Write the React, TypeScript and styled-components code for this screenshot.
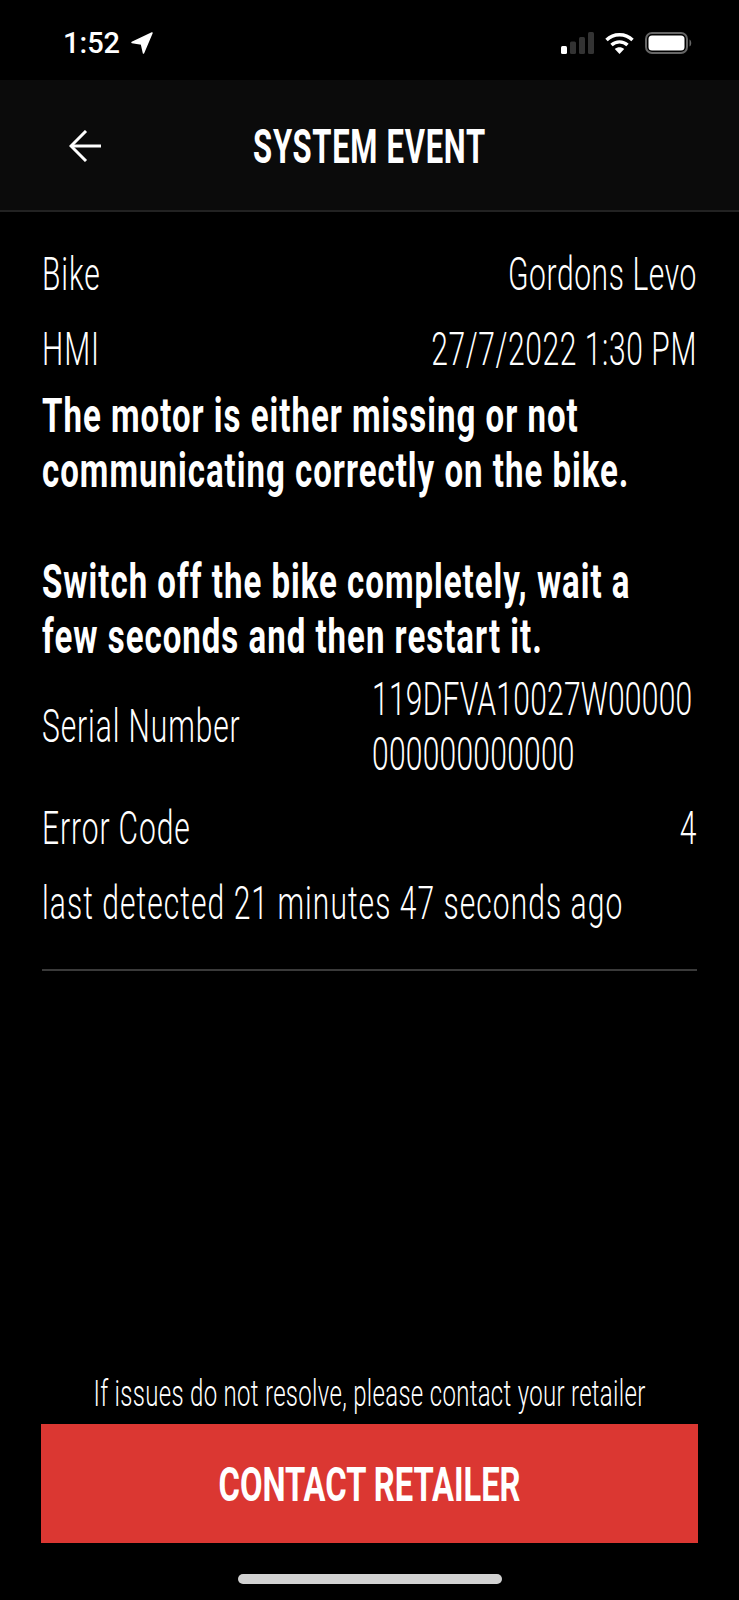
import React from 'react';
import styled, { createGlobalStyle } from 'styled-components';

const FONT = 'Roboto, "Liberation Sans", sans-serif';

const GlobalStyle = createGlobalStyle`
  html, body {
    margin: 0;
    padding: 0;
    background: #000;
  }
  * { box-sizing: border-box; }
`;

const Screen = styled.div`
  width: 739px;
  height: 1600px;
  background: #000;
  color: #fff;
  font-family: ${FONT};
  display: flex;
  flex-direction: column;
  overflow: hidden;
`;

// the original face is a condensed DIN, so a normal face is drawn taller
const Tall = styled.span<{ $scale?: number }>`
  display: inline-block;
  white-space: nowrap;
  transform: scaleY(${props => props.$scale ?? 1.55});
`;

const StatusBar = styled.div`
  height: 80px;
  flex: none;
  padding: 32px 47px 0 63px;
  display: flex;
  justify-content: space-between;
  align-items: flex-start;
`;

const StatusGroup = styled.div`
  display: flex;
  align-items: center;
  gap: 11px;
  height: 22px;
`;

const Clock = styled.span`
  font-size: 29px;
  font-weight: 500;
  line-height: 22px;
`;

const NavBar = styled.div`
  height: 132px;
  flex: none;
  background: #0b0b0b;
  border-bottom: 2px solid #222;
  display: flex;
  align-items: center;
  justify-content: center;
  position: relative;
`;

const BackButton = styled.button`
  position: absolute;
  left: 69px;
  top: 50px;
  padding: 0;
  border: 0;
  background: none;
  display: flex;
  color: #fff;
`;

const NavTitle = styled.h1`
  margin: 3px 0 0;
  font-size: 31px;
  font-weight: 700;
  line-height: 40px;
  letter-spacing: 0.7px;
`;

const Content = styled.div`
  padding: 24px 42px 0;
  display: flex;
  flex-direction: column;
`;

const Row = styled.div`
  display: flex;
  justify-content: space-between;
  align-items: center;
  min-height: 75px;
  font-size: 30px;
  font-weight: 300;
  letter-spacing: 0.9px;
`;

const SerialRow = styled(Row)`
  min-height: 124px;
  margin-bottom: 2px;
`;

const RowValue = styled(Tall)`
  letter-spacing: 0.6px;
`;

const DetectedLabel = styled(Tall)`
  letter-spacing: 1.05px;
`;

const SerialValue = styled.div`
  width: 325px;
  display: flex;
  flex-direction: column;
  letter-spacing: 0.25px;
`;

const SerialLine = styled.div`
  height: 55px;
  line-height: 55px;
`;

const Message = styled.div`
  margin-top: 2px;
  font-size: 33px;
  font-weight: 700;
  letter-spacing: 1px;
`;

const MessageLine = styled.div`
  height: 55.2px;
  line-height: 55.2px;
`;

const Divider = styled.hr`
  margin: 29px 0 0;
  border: 0;
  height: 2px;
  background: #3a3a3a;
`;

const Footer = styled.div`
  margin-top: auto;
  padding: 0 41px;
  display: flex;
  flex-direction: column;
  align-items: center;
`;

const Hint = styled.div`
  font-size: 24px;
  font-weight: 300;
  line-height: 54px;
  height: 57px;
  letter-spacing: 0.3px;
`;

const ContactButton = styled.button`
  width: 100%;
  height: 119px;
  padding: 3px 0 0;
  border: 0;
  background: #db3732;
  color: #fff;
  font-family: ${FONT};
  font-size: 32.7px;
  font-weight: 700;
`;

const HomeZone = styled.div`
  height: 57px;
  flex: none;
  display: flex;
  justify-content: center;
  padding-top: 31px;
`;

const HomeBar = styled.div`
  width: 264px;
  height: 10px;
  border-radius: 5px;
  background: #d2d2d2;
`;

const LocationIcon = () => (
  <svg width="22" height="22" viewBox="0 0 22 22" fill="#fff">
    <path d="M21 1 L1 10.5 L10.5 12 L12.5 21 Z" stroke="#fff" strokeWidth="1.5" strokeLinejoin="round" />
  </svg>
);

const SignalIcon = () => (
  <svg width="33" height="22" viewBox="0 0 33 22">
    <rect x="0" y="14" width="6" height="8" rx="1.5" fill="#fff" />
    <rect x="9" y="9.5" width="6" height="12.5" rx="1.5" fill="#333" />
    <rect x="18" y="5" width="6" height="17" rx="1.5" fill="#333" />
    <rect x="27" y="0" width="6" height="22" rx="1.5" fill="#333" />
  </svg>
);

const WifiIcon = () => (
  <svg width="29" height="22" viewBox="0 0 29 22" fill="none" stroke="#fff" strokeWidth="3.4">
    <path d="M1.5 8 C8.5 1 20.5 1 27.5 8" />
    <path d="M6.5 13 C11 8.8 18 8.8 22.5 13" />
    <path d="M14.5 22 L9.8 17 C12.4 14.8 16.6 14.8 19.2 17 Z" fill="#fff" stroke="none" />
  </svg>
);

const BatteryIcon = () => (
  <svg width="47" height="22" viewBox="0 0 47 22">
    <rect x="1" y="1" width="41" height="20" rx="6" fill="none" stroke="#666" strokeWidth="2" />
    <rect x="3.5" y="3.5" width="36" height="15" rx="3.5" fill="#fff" />
    <path d="M44.5 7.5 C46.8 8.5 46.8 13.5 44.5 14.5 Z" fill="#666" />
  </svg>
);

const BackArrow = () => (
  <svg width="32" height="32" viewBox="0 0 32 32" fill="none" stroke="#fff" strokeWidth="3">
    <path d="M32 16 H2" />
    <path d="M17 1 L2 16 L17 31" />
  </svg>
);

const messageLines = [
  'The motor is either missing or not',
  'communicating correctly on the bike.',
  '\u00a0',
  'Switch off the bike completely, wait a',
  'few seconds and then restart it.',
];

export default function App() {
  return (
    <Screen>
      <GlobalStyle />
      <StatusBar>
        <StatusGroup>
          <Clock>1:52</Clock>
          <LocationIcon />
        </StatusGroup>
        <StatusGroup>
          <SignalIcon />
          <WifiIcon />
          <BatteryIcon />
        </StatusGroup>
      </StatusBar>

      <NavBar>
        <BackButton aria-label="Back">
          <BackArrow />
        </BackButton>
        <NavTitle>
          <Tall>SYSTEM EVENT</Tall>
        </NavTitle>
      </NavBar>

      <Content>
        <Row>
          <Tall>Bike</Tall>
          <RowValue>Gordons Levo</RowValue>
        </Row>
        <Row>
          <Tall>HMI</Tall>
          <RowValue>27/7/2022 1:30 PM</RowValue>
        </Row>
        <Message>
          {messageLines.map((line, i) => (
            <MessageLine key={i}>
              <Tall $scale={1.46}>{line}</Tall>
            </MessageLine>
          ))}
        </Message>
        <SerialRow>
          <Tall>Serial Number</Tall>
          <SerialValue>
            <SerialLine>
              <Tall>119DFVA10027W00000</Tall>
            </SerialLine>
            <SerialLine>
              <Tall>000000000000</Tall>
            </SerialLine>
          </SerialValue>
        </SerialRow>
        <Row>
          <Tall>Error Code</Tall>
          <RowValue>4</RowValue>
        </Row>
        <Row>
          <DetectedLabel>last detected 21 minutes 47 seconds ago</DetectedLabel>
        </Row>
        <Divider />
      </Content>

      <Footer>
        <Hint>
          <Tall>If issues do not resolve, please contact your retailer</Tall>
        </Hint>
        <ContactButton>
          <Tall $scale={1.46}>CONTACT RETAILER</Tall>
        </ContactButton>
      </Footer>

      <HomeZone>
        <HomeBar />
      </HomeZone>
    </Screen>
  );
}
